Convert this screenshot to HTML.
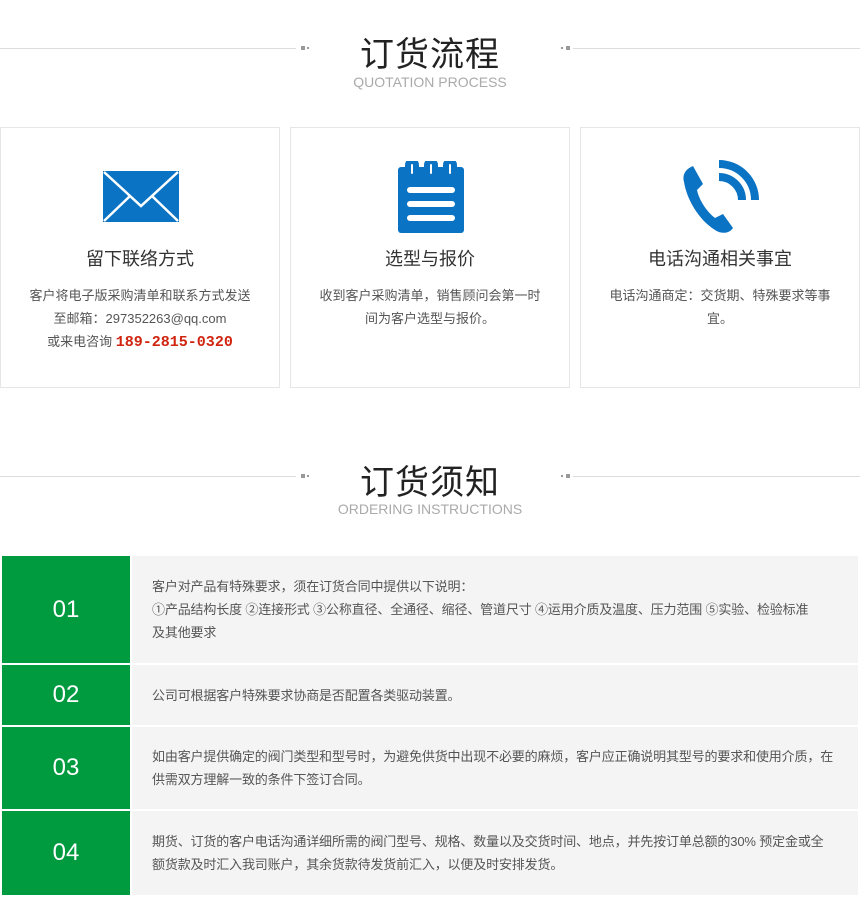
<!DOCTYPE html>
<html><head><meta charset="utf-8"><style>
*{margin:0;padding:0;box-sizing:border-box}
body{width:860px;height:906px;background:#fff;font-family:"Liberation Sans","Noto Sans CJK SC",sans-serif;position:relative;overflow:hidden}
.abs{position:absolute}
.line{position:absolute;height:1px;background:#ddd}
.sq{position:absolute;width:4px;height:4px;background:#999}
.dot{position:absolute;width:2px;height:2px;background:#999}
.h{position:absolute;left:0;width:860px;text-align:center;color:#222;font-size:34px;letter-spacing:1px;font-family:"Noto Sans CJK SC",sans-serif}
.s{position:absolute;left:0;width:860px;text-align:center;color:#aaa;font-size:14px}
.card{position:absolute;top:127px;width:280px;height:261px;border:1px solid #e6e6e6;text-align:center}
.card h3{position:absolute;top:117px;left:0;width:100%;font-weight:normal;font-size:18px;color:#333}
.card p{position:absolute;top:156px;left:22px;right:22px;font-size:13px;color:#555;line-height:23px}
.row{position:absolute;left:2px;width:856px}
.num{position:absolute;left:0;top:0;bottom:0;width:128px;background:#009a3f;color:#fff;font-size:24px;display:flex;align-items:center;justify-content:center}
.txt{position:absolute;left:130px;right:0;top:0;bottom:0;background:#f4f4f4;display:flex;align-items:center;padding:0 12px 0 20px;font-size:13px;color:#555;line-height:23px;letter-spacing:-0.15px}
</style></head><body>
<div class="line" style="left:0;width:296px;top:48px"></div>
<div class="sq" style="left:301px;top:46px"></div><div class="dot" style="left:307px;top:47px"></div>
<div class="dot" style="left:561px;top:47px"></div><div class="sq" style="left:566px;top:46px"></div>
<div class="line" style="left:573px;width:287px;top:48px"></div>
<div class="h" style="top:27px">订货流程</div>
<div class="s" style="top:74px">QUOTATION PROCESS</div>

<div class="card" style="left:0">
<svg class="abs" style="left:102px;top:43px" width="76" height="51" viewBox="0 0 76 51"><rect width="76" height="51" fill="#0a73c4"/><path d="M1 1 L38 35 L75 1 M1 50 L27 25 M75 50 L49 25" stroke="#fff" stroke-width="2.5" fill="none"/></svg>
<h3>留下联络方式</h3>
<p>客户将电子版采购清单和联系方式发送<br>至邮箱：297352263@qq.com<br>或来电咨询 <span style="color:#d0240f;font-size:15px;font-weight:bold;font-family:'Liberation Mono',monospace">189-2815-0320</span></p>
</div>
<div class="card" style="left:290px">
<svg class="abs" style="left:107px;top:33px" width="66" height="72" viewBox="0 0 66 72"><rect x="0" y="6" width="66" height="66" rx="3" fill="#0a73c4"/><g stroke="#0a73c4" stroke-width="6" fill="#fff"><rect x="10" y="0" width="8" height="16" rx="4"/><rect x="29" y="0" width="8" height="16" rx="4"/><rect x="48" y="0" width="8" height="16" rx="4"/></g><g stroke="#fff" stroke-width="6" stroke-linecap="round"><line x1="12" y1="29" x2="54" y2="29"/><line x1="12" y1="43" x2="54" y2="43"/><line x1="12" y1="57" x2="54" y2="57"/></g></svg>
<h3>选型与报价</h3>
<p>收到客户采购清单，销售顾问会第一时<br>间为客户选型与报价。</p>
</div>
<div class="card" style="left:580px">
<svg class="abs" style="left:100px;top:32px" width="80" height="76" viewBox="0 0 80 76"><path d="M3 22 C1 14 5 9 12 6 L22 24 L16 30 C18 40 26 52 34 58 L42 54 L52 68 C48 74 40 74 34 70 C18 60 6 40 3 22 Z" fill="#0a73c4"/><path d="M38 17 A23 23 0 0 1 61 40" stroke="#0a73c4" stroke-width="8" fill="none"/><path d="M38 4 A36 36 0 0 1 74 40" stroke="#0a73c4" stroke-width="8" fill="none"/></svg>
<h3>电话沟通相关事宜</h3>
<p>电话沟通商定：交货期、特殊要求等事<br>宜。</p>
</div>

<div class="line" style="left:0;width:296px;top:476px"></div>
<div class="sq" style="left:301px;top:474px"></div><div class="dot" style="left:307px;top:475px"></div>
<div class="dot" style="left:561px;top:475px"></div><div class="sq" style="left:566px;top:474px"></div>
<div class="line" style="left:573px;width:287px;top:476px"></div>
<div class="h" style="top:455px">订货须知</div>
<div class="s" style="top:501px">ORDERING INSTRUCTIONS</div>

<div class="row" style="top:556px;height:107px"><div class="num">01</div><div class="txt">客户对产品有特殊要求，须在订货合同中提供以下说明：<br>①产品结构长度 ②连接形式 ③公称直径、全通径、缩径、管道尺寸 ④运用介质及温度、压力范围 ⑤实验、检验标准<br>及其他要求</div></div>
<div class="row" style="top:665px;height:60px"><div class="num">02</div><div class="txt">公司可根据客户特殊要求协商是否配置各类驱动装置。</div></div>
<div class="row" style="top:727px;height:82px"><div class="num">03</div><div class="txt">如由客户提供确定的阀门类型和型号时，为避免供货中出现不必要的麻烦，客户应正确说明其型号的要求和使用介质，在<br>供需双方理解一致的条件下签订合同。</div></div>
<div class="row" style="top:811px;height:84px"><div class="num">04</div><div class="txt">期货、订货的客户电话沟通详细所需的阀门型号、规格、数量以及交货时间、地点，并先按订单总额的30% 预定金或全<br>额货款及时汇入我司账户，其余货款待发货前汇入，以便及时安排发货。</div></div>
</body></html>
